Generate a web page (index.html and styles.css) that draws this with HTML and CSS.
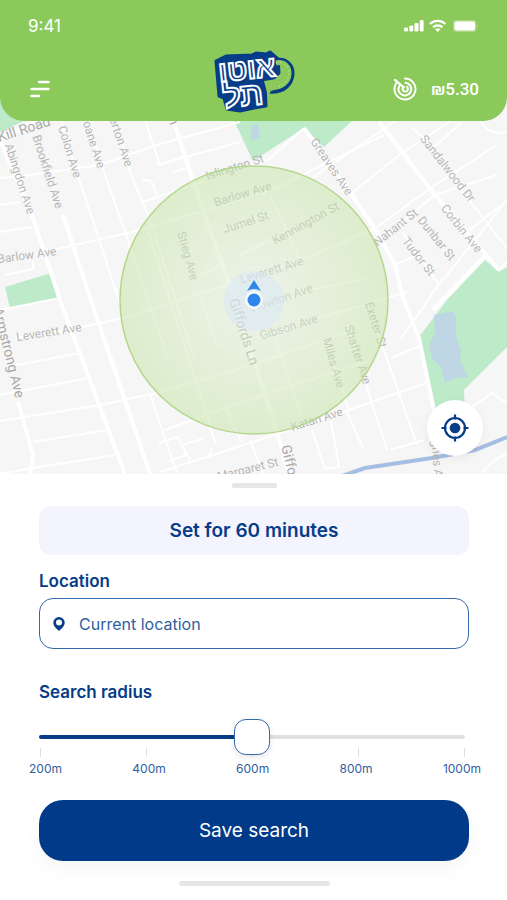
FILE: index.html
```
<!DOCTYPE html>
<html lang="en">
<head>
  <meta charset="UTF-8">
  <meta name="viewport" content="width=device-width, initial-scale=1">
  <title>AutoTel - Search radius</title>
  <link rel="stylesheet" href="styles.css">
</head>
<body>

<header class="header">
  <div class="status">
    <span class="time">9:41</span>
    <svg class="status-icons" width="76" height="16" viewBox="0 0 76 16" fill="#fff" aria-hidden="true">
      <rect x="1" y="9.500" width="4" height="4" rx="1.200"/>
      <rect x="6.300" y="7.500" width="4" height="6" rx="1.200"/>
      <rect x="11.500" y="5" width="4" height="8.500" rx="1.200"/>
      <rect x="16.800" y="2" width="3.800" height="11.500" rx="1.200"/>
      <g fill="none" stroke="#fff" stroke-width="2.200">
        <path d="M27 6a11 11 0 0 1 15.400 0"/>
        <path d="M30 9.200a6.800 6.800 0 0 1 9.400 0"/>
      </g>
      <path d="M32 11.200q2.700-2 5.400 0L34.700 14z"/>
      <rect x="50" y="2" width="23.500" height="12" rx="3.500" opacity=".3"/>
      <rect x="51.500" y="3.500" width="20.500" height="9" rx="2"/>
      <path d="M74.500 6q1.500 2 0 4z" opacity=".4"/>
    </svg>
  </div>
  <div class="bar">
    <button class="menu-btn" aria-label="Menu">
      <svg width="20" height="18" viewBox="0 0 20 18" stroke="#fff" stroke-width="2.400" stroke-linecap="round">
        <path d="M9 2h9.500M1.500 9h17M1.500 16h7.500"/>
      </svg>
    </button>
    <svg class="logo" width="84" height="70" viewBox="0 0 84 70" role="img" aria-label="אוטו תל">
      <path d="M63 17C73 14 79.500 21 79 29S72 47 57 45" fill="none" stroke="#063c88" stroke-width="7"/>
      <path d="M4 16L14 11L40 10L44 8L54 9L58 7L66 14L67 28L62 33L53 37L54 61L42 63L28 66L15 64L12 53L7 51z" fill="#063c88" stroke="#063c88" stroke-width="3" stroke-linejoin="round"/>
      <path d="M64 18C72 16 77.500 22 77 29S70 44 58 42" fill="none" stroke="#8bc95a" stroke-width="5"/>
      <path d="M64 18C72 16 77.500 22 77 29S70 44 58 42" fill="none" stroke="#d9edc2" stroke-width="1" stroke-dasharray="1 3"/>
      <path d="M52 36l13-2-3 5 3 5-6 2-3 5z" fill="#8bc95a"/>
      <g class="logo-text">
        <text transform="translate(36 34) rotate(-6)">אוטו</text>
        <text class="logo-low" transform="translate(32 61) rotate(-6)">תל</text>
      </g>
    </svg>
    <div class="fare">
      <svg width="24" height="24" viewBox="0 0 24 24" fill="none" stroke="#fff" stroke-width="2" stroke-linecap="round" aria-hidden="true">
        <path d="M12 1.500A10.500 10.500 0 1 1 3 6.600"/>
        <path d="M12.500 5.700A6.400 6.400 0 1 1 6.300 9"/>
        <path d="M2 3l8.700 7.400" stroke-width="2.300"/>
        <path d="M10.500 9.800a2.700 2.700 0 1 0 3.500 0"/>
      </svg>
      <span><span class="shekel">₪</span>5.30</span>
    </div>
  </div>
</header>

<main class="map">
  <svg class="map-art" viewBox="0 95 507 379" preserveAspectRatio="xMidYMid slice" role="img" aria-label="Map of the search area">
    <defs>
      <radialGradient id="area">
        <stop offset="0" stop-color="#e3f0dc" stop-opacity=".5"/>
        <stop offset="1" stop-color="#c8e5ab" stop-opacity=".55"/>
      </radialGradient>
    </defs>
    <rect y="95" width="507" height="379" fill="#f6f6f6"/>

    <!-- parks and water -->
    <g fill="#bdebca">
      <path d="M0 95h34l-12 27L0 132z"/>
      <path d="M222 95l31 66 51-33 20 19 28-26 38-26z"/>
      <path d="M5 287l46-14 9 26-50 9z"/>
      <path d="M485 260l14 12 8-5v80l-43 43 1 20-31 2-15-75 28-37z"/>
    </g>
    <path d="M434 315l10-2 8-2 4 5 0 19 5 17-1 9 8 16-13 1-10 5-4-16-9-9-3-13 6-12z" fill="#bfd6e4"/>
    <path d="M251 126l7-2 2 14-9 3z" fill="#bfd6e4"/>

    <!-- streets -->
    <g class="streets">
      <path d="M0 178l30-3 70-10 60-21 80-22M143 202l50-17 75-25 36-32M157 165l83-23M53 250l87-20 60-18 80-25 32-17 72-35M0 232l32-5M0 205l20-3M5 275l28-6v-8"/>
      <path d="M0 310l60-12M16 338l66-11 45-10 113-36 64-22 70-30 61-44 62-40M17 365l63-12M0 395l88-17M0 421l100-16 57-12 96-28 100-35M33 442l74-12M0 474l33-6 82-13M165 430l88-32 115-37M160 472l93-30 90-30 83-29M200 275l20-9M224 230l48-18M240 255l100-51M259 338l60-20 88-26M250 313l64-24 53-10"/>
      <path d="M53 95l27 87 20 60 20 62M80 95l25 80 20 57 43 126M110 95l20 77 18 43 47 145M145 120l15 45 28-10M172 173l14-5M142 181q9-3 11 4l4 10M148 230l68 215M200 297l18 50M270 195l33 72M276 340l25 75M326 338l22 70M347 325l24 75 16 50M367 303l18 50 32 92M393 357l27-11"/>
      <path d="M150 395l27 78M158 443l20-6 8 18-16 6M190 460l-8-15 20-6M208 458l4-10M227 410l14 32M250 440l13 34M312 430l13 39 14-2-8-46M346 410l17 38M390 450l34-10"/>
      <path d="M312 178l88-60M352 193l50-40 53-35M377 242l58-47 62-20M439 285l68-85M412 128l12 10 48 66 35 44M460 237l47-36M433 148l28-25M480 120q8 16 27 12M439 285l-36-52M400 340l42-60M395 265l20-9M499 270l8-8M470 408l22-15 15 10M482 474q8-14 25-20"/>
    </g>
    <g class="streets wide">
      <path d="M165 95l27 83 35 100 47 144 15 52M0 140l32 75 28 85 65 174M63 215l34 103 53 156M304 128l48 67 25 37 18 33 7 30 17 43 15 72M379 122l56 73 64 75M18 402l15 53-3 19M0 140L55 110M433 310l52-54"/>
    </g>
    <path d="M342 476l23-8 67-10 43-8 32-13" fill="none" stroke="#a5bee3" stroke-width="4"/>

    <g class="names">
      <text transform="translate(19 179) rotate(72)">Abingdon Ave</text>
      <text transform="translate(47 172) rotate(72)">Brookfield Ave</text>
      <text transform="translate(69 152) rotate(73)">Colon Ave</text>
      <text transform="translate(92 141) rotate(72)">Doane Ave</text>
      <text transform="translate(118 135) rotate(72)">Elverton Ave</text>
      <text transform="translate(235 168) rotate(-18)">Islington St</text>
      <text transform="translate(243 195) rotate(-17)">Barlow Ave</text>
      <text transform="translate(246 223) rotate(-18)">Jumel St</text>
      <text transform="translate(187 256) rotate(74)">Stieg Ave</text>
      <text transform="translate(27 256) rotate(-8)">Barlow Ave</text>
      <text transform="translate(49 333) rotate(-9)">Leverett Ave</text>
      <text transform="translate(331 167) rotate(56)">Greaves Ave</text>
      <text transform="translate(447 169) rotate(52)">Sandalwood Dr</text>
      <text transform="translate(461 229) rotate(51)">Corbin Ave</text>
      <text transform="translate(306 224) rotate(-29)">Kennington St</text>
      <text transform="translate(396 228) rotate(-38)">Nahant St</text>
      <text transform="translate(436 239) rotate(51)">Dunbar St</text>
      <text transform="translate(418 257) rotate(52)">Tudor St</text>
      <text transform="translate(272 271) rotate(-17)">Leverett Ave</text>
      <text transform="translate(282 299) rotate(-19)">Howton Ave</text>
      <text transform="translate(289 328) rotate(-17)">Gibson Ave</text>
      <text transform="translate(333 363) rotate(74)">Miles Ave</text>
      <text transform="translate(357 355) rotate(72)">Shafter Ave</text>
      <text transform="translate(375 325) rotate(73)">Exeter St</text>
      <text transform="translate(317 420) rotate(-17)">Katan Ave</text>
      <text transform="translate(248 470) rotate(-14)">Margaret St</text>
      <text transform="translate(436 457) rotate(86)">Hughes Ave</text>
      <g class="big">
        <text transform="translate(6 136) rotate(-18)">Fresh Kill Road</text>
        <text transform="translate(8 353) rotate(76)">Armstrong Ave</text>
        <text transform="translate(243 332) rotate(72)">Giffords Ln</text>
        <text transform="translate(293 479) rotate(76)">Giffords Ln</text>
        <text transform="translate(162 92) rotate(70)">Giffords Ln</text>
      </g>
    </g>

    <!-- search radius and current position -->
    <circle cx="254" cy="300" r="134" fill="url(#area)" stroke="#b5d78d" stroke-width="1.500"/>
    <circle cx="254" cy="301" r="30" fill="#d8e6fa" opacity=".5"/>
    <circle cx="254" cy="300" r="9" fill="#fff" opacity=".8"/>
    <circle cx="254" cy="300" r="6.500" fill="#2f86ea"/>
    <path d="M254 280l7 11q-7-4-14 0z" fill="#2f86ea"/>
  </svg>
  <button class="locate" aria-label="Find my location">
    <svg width="28" height="28" viewBox="0 0 28 28" fill="none" stroke="#063c88" stroke-width="2.200">
      <circle cx="14" cy="14" r="10"/>
      <circle cx="14" cy="14" r="5.300" fill="#063c88" stroke="none"/>
      <path d="M14 .500v5M14 22.500v5M.500 14h5M22.500 14h5"/>
    </svg>
  </button>
</main>

<form class="sheet">
  <div class="grip"></div>
  <button type="button" class="timer">Set for 60 minutes</button>

  <label class="title" for="location">Location</label>
  <div class="field">
    <svg width="12" height="14" viewBox="0 0 12 14" aria-hidden="true">
      <path d="M6 0a5.700 5.700 0 0 1 5.700 5.700C11.700 9 8.500 11.500 6 14 3.500 11.500.300 9 .300 5.700A5.700 5.700 0 0 1 6 0zm0 2.600a3 3 0 1 0 0 6 3 3 0 0 0 0-6z" fill="#063c88" fill-rule="evenodd"/>
    </svg>
    <input type="text" id="location" value="Current location">
  </div>

  <label class="title radius-title" for="radius">Search radius</label>
  <input type="range" class="slider" id="radius" min="200" max="1000" step="200" value="600">
  <div class="ticks"><i></i><i></i><i></i><i></i><i></i></div>
  <div class="marks">
    <span>200m</span>
    <span>400m</span>
    <span>600m</span>
    <span>800m</span>
    <span>1000m</span>
  </div>

  <button type="submit" class="save">Save search</button>
  <div class="home"></div>
</form>

</body>
</html>
```
FILE: styles.css
```
* { margin: 0; padding: 0; box-sizing: border-box; }
body { min-height: 100vh; display: flex; flex-direction: column; background: #fff; color: #063c88; font-family: Inter, "Open Sans", sans-serif; }
button, input { font: inherit; color: inherit; border: 0; background: none; }
svg { display: block; }

.header { position: relative; z-index: 1; height: 121px; padding: 16px 28px 0; background: #8bc95a; color: #fff; border-radius: 0 0 24px 24px; }
.status { display: flex; justify-content: space-between; align-items: center; height: 20px; }
.time { font-size: 17px; line-height: 20px; }
.bar { display: grid; grid-template-columns: 1fr auto 1fr; align-items: center; height: 76px; margin-top: 7px; }
.menu-btn { width: 24px; height: 24px; display: flex; align-items: center; justify-content: center; margin-top: 16px; }
.logo { margin-bottom: 2px; }
.logo-text { font: bold 29px "Liberation Sans", sans-serif; text-anchor: middle; direction: rtl; fill: #063c88; stroke: #fff; stroke-width: 2px; }
.logo-low { font-size: 32px; }
.fare { display: flex; align-items: center; justify-content: flex-end; gap: 14px; margin-top: 16px; font: 500 17px/24px Roboto, sans-serif; }
.shekel { font-size: 17px; }

.map { position: relative; flex: 1; min-height: 320px; margin-top: -26px; overflow: hidden; }
.map-art { position: absolute; width: 100%; height: 100%; }
.streets { fill: none; stroke: #fff; stroke-width: 2px; }
.wide { stroke-width: 4px; }
.names { font: 12px Roboto, sans-serif; text-anchor: middle; dominant-baseline: middle; fill: #b7b7b7; }
.big { font-size: 14px; fill: #a9a9a9; }
.locate { position: absolute; right: 24px; bottom: 18px; width: 56px; height: 56px; display: flex; align-items: center; justify-content: center; border-radius: 50%; background: #fff; box-shadow: 0 3px 10px rgba(0,0,0,0.06); }

.sheet { display: flex; flex-direction: column; padding: 9px 38px 14px 39px; }
.grip { align-self: center; width: 45px; height: 5px; border-radius: 2px; background: #e6e6e6; }
.timer { height: 49px; margin-top: 18px; border-radius: 12px; background: #f3f4fd; font-size: 19px; font-weight: 600; }
.title { margin-top: 14px; font-size: 17px; line-height: 24px; font-weight: 600; }
.field { display: flex; align-items: center; gap: 14px; height: 51px; margin-top: 5px; padding: 0 13px; border: 1px solid #376aac; border-radius: 14px; }
.field input { flex: 1; min-width: 0; font-size: 16px; color: #30609f; outline: none; }
.radius-title { margin-top: 31px; }
.slider { -webkit-appearance: none; appearance: none; position: relative; z-index: 1; width: calc(100% - 4px); height: 36px; margin-top: 15px; cursor: pointer; }
.slider::-webkit-slider-runnable-track { height: 4px; border-radius: 2px; background: linear-gradient(to right, #063c88 50%, #e0e0e0 50%); }
.slider::-webkit-slider-thumb { -webkit-appearance: none; width: 36px; height: 36px; margin-top: -16px; border: 1px solid #376aac; border-radius: 12px; background: #fff; box-shadow: 0 2px 6px rgba(0,0,0,0.1); }
.ticks { display: flex; justify-content: space-between; margin: -7px 4px 0 1px; }
.ticks i { width: 1px; height: 9px; background: #dedede; }
.marks { display: flex; justify-content: space-between; margin: 4px -12px 0 -10px; font-size: 12px; line-height: 16px; color: #30609f; }
.save { height: 61px; margin-top: 23px; border-radius: 24px; background: #003a88; color: #fff; font-size: 19px; box-shadow: 0 8px 20px rgba(0,0,0,0.04); }
.home { align-self: center; width: 151px; height: 5px; margin-top: 20px; border-radius: 3px; background: #e6e6e6; }
```
